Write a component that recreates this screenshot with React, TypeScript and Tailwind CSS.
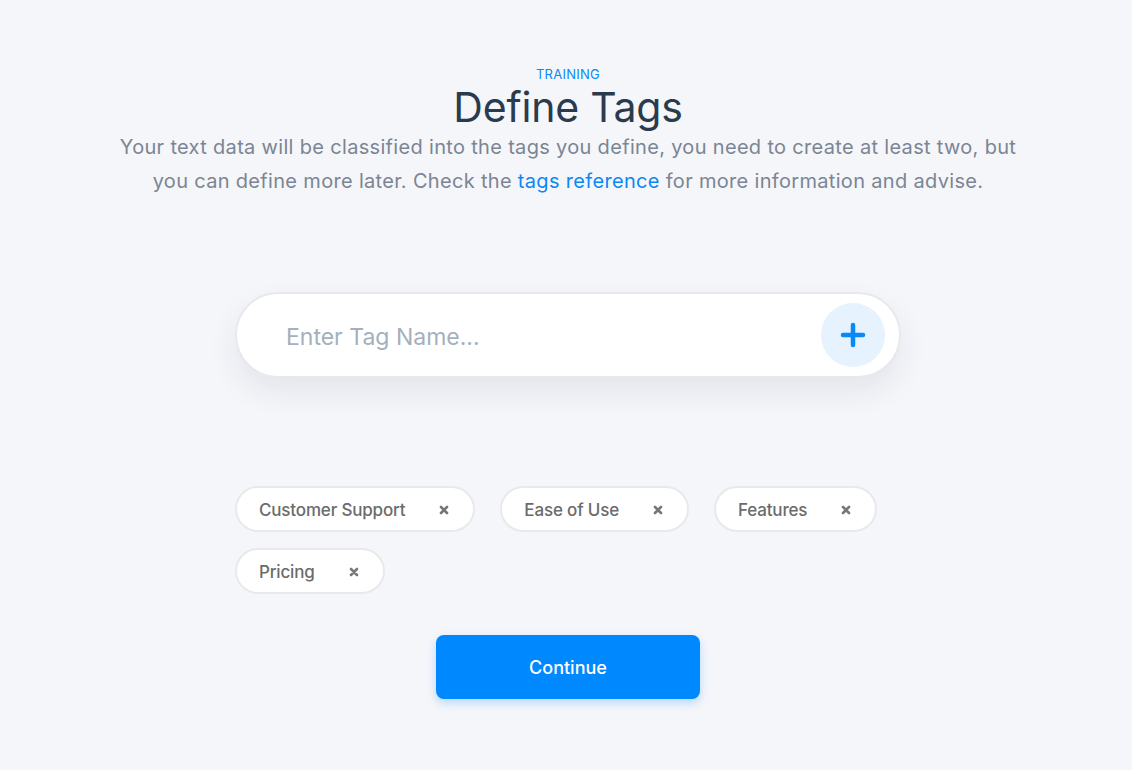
import { useState } from "react";

const tags = ["Customer Support", "Ease of Use", "Features", "Pricing"];

const font = { fontFamily: "Inter, 'Noto Sans', sans-serif" };

export default function App() {
  const [value, setValue] = useState("");

  return (
    <div className="min-h-[770px] w-full bg-[#f5f6fa] flex flex-col items-center pl-[4px]" style={font}>
      <div className="pt-[66px] flex flex-col items-center text-center">
        <p className="text-[13px] leading-4 text-[#0a88f5] tracking-[0.02em] uppercase">Training</p>
        <h1 className="mt-[2px] text-[41px] leading-[46px] text-[#2b3b4e] font-normal tracking-[-0.005em]">
          Define Tags
        </h1>
        <p className="text-[20px] leading-[34px] text-[#7b8593] tracking-[0.016em]">
          Your text data will be classified into the tags you define, you need to create at least two, but
          <br />
          you can define more later. Check the <a href="#" className="text-[#0a88f5]">tags reference</a> for
          more information and advise.
        </p>
      </div>

      <div className="mt-[94px] w-[666px]">
        <div className="h-[86px] rounded-full bg-white border-2 border-[#e8e9ec] shadow-[0_14px_30px_rgba(30,40,60,0.08)] flex items-center pl-[49px] pr-[14px]">
          <input
            value={value}
            onChange={(e) => setValue(e.target.value)}
            placeholder="Enter Tag Name..."
            className="flex-1 pt-[5px] bg-transparent outline-none text-[23px] text-[#3a4a5c] placeholder:text-[#a4b0bd]"
          />
          <button className="w-[64px] h-[64px] rounded-full bg-[#e6f2fe] flex items-center justify-center">
            <svg width="28" height="28" viewBox="0 0 28 28">
              <path d="M14 4v20M4 14h20" stroke="#0a88f5" strokeWidth="4.5" strokeLinecap="round" />
            </svg>
          </button>
        </div>

        <div className="mt-[108px] flex flex-wrap gap-x-[25px] gap-y-[16px]">
          {tags.map((t) => (
            <div
              key={t}
              className="h-[46px] rounded-full bg-white border-2 border-[#e8e9ec] flex items-center pl-[22px] pr-[24px]"
            >
              <span className="pt-[4px] text-[17px] font-medium text-[#6b6b6b] tracking-[-0.01em]">{t}</span>
              <span className="ml-[34px] pt-[2px] flex items-center">
                <svg width="10" height="10" viewBox="0 0 10 10">
                  <path d="M2 2l6 6M8 2l-6 6" stroke="#777" strokeWidth="2.6" strokeLinecap="round" />
                </svg>
              </span>
            </div>
          ))}
        </div>
      </div>

      <button className="mt-[41px] w-[264px] h-[64px] rounded-lg bg-[#0088ff] text-white text-[18px] font-medium shadow-[0_4px_10px_rgba(0,136,255,0.25)]">
        Continue
      </button>
    </div>
  );
}
